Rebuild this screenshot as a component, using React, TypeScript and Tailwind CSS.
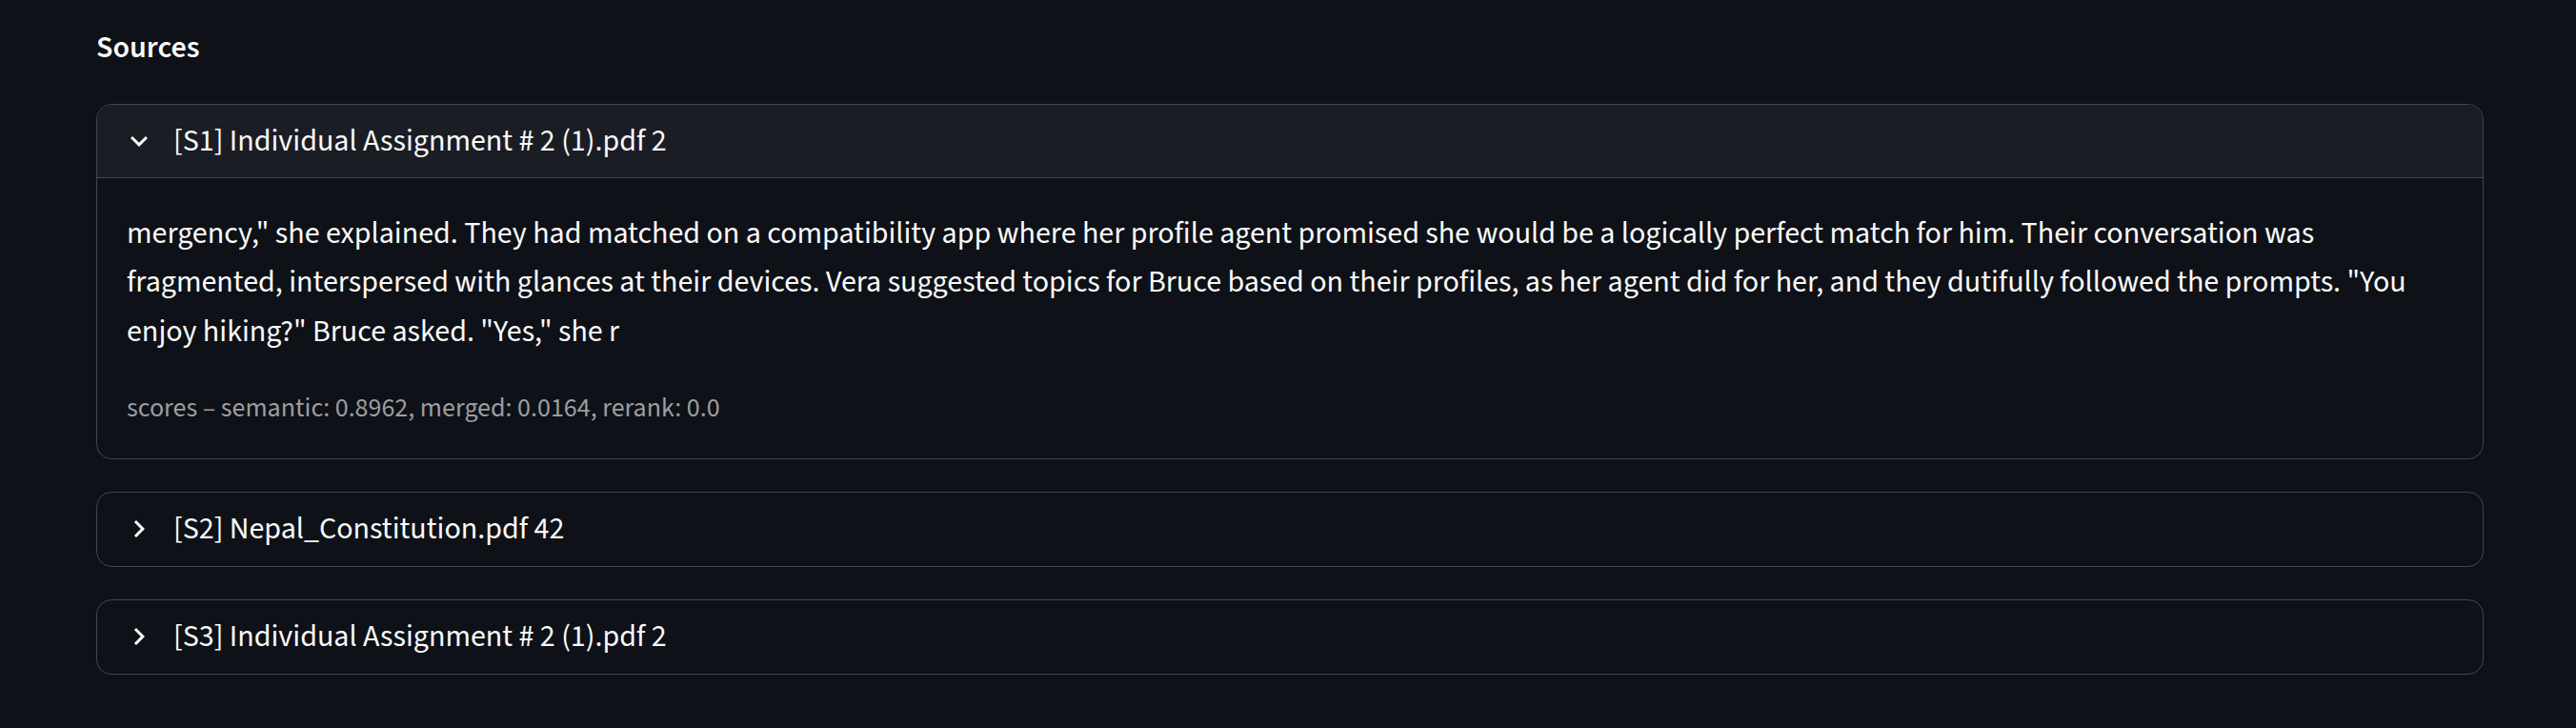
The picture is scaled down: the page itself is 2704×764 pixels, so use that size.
import React from "react";

const BODY = `mergency," she explained. They had matched on a compatibility app where her profile agent promised she would be a logically perfect match for him. Their conversation was fragmented, interspersed with glances at their devices. Vera suggested topics for Bruce based on their profiles, as her agent did for her, and they dutifully followed the prompts. "You enjoy hiking?" Bruce asked. "Yes," she r`;

function ChevronDown() {
  return (
    <svg viewBox="0 0 24 24" className="w-[36px] h-[36px] shrink-0 fill-[#fafafa]">
      <path d="M16.59 8.59L12 13.17 7.41 8.59 6 10l6 6 6-6z" />
    </svg>
  );
}

function ChevronRight() {
  return (
    <svg viewBox="0 0 24 24" className="w-[36px] h-[36px] shrink-0 fill-[#fafafa]">
      <path d="M10 6L8.59 7.41 13.17 12l-4.58 4.59L10 18l6-6z" />
    </svg>
  );
}

function Expander({ title, open, children }: { title: string; open?: boolean; children?: React.ReactNode }) {
  return (
    <div className="border border-[#44464c] rounded-[16px] overflow-hidden">
      <div
        className={
          open
            ? "h-[77px] flex items-center pl-[26px] gap-[18px] bg-[#1b1d25] border-b border-[#44464c]"
            : "h-[77px] flex items-center pl-[26px] gap-[18px]"
        }
      >
        {open ? <ChevronDown /> : <ChevronRight />}
        <span className="text-[32px] leading-[51.2px] text-[#fafafa]">{title}</span>
      </div>
      {open && <div className="pt-[33px] pb-[30px] px-[31px] flex flex-col gap-[32px]">{children}</div>}
    </div>
  );
}

export default function App() {
  return (
    <div className="min-h-[764px] bg-[#0e1117] pl-[101px] pt-[25px] font-['Source_Sans_3','Source_Sans_Pro',sans-serif] antialiased">
      <div className="w-[2506px] flex flex-col">
        <div className="text-[32px] leading-[51.2px] font-semibold text-[#fafafa]">Sources</div>
        <div className="mt-[33px] flex flex-col gap-[34px]">
          <Expander title="[S1] Individual Assignment # 2 (1).pdf 2" open>
            <p className="text-[32px] leading-[51.2px] text-[#fafafa]">{BODY}</p>
            <p className="text-[28px] leading-[44.8px] text-[#9c9da1]">scores – semantic: 0.8962, merged: 0.0164, rerank: 0.0</p>
          </Expander>
          <Expander title="[S2] Nepal_Constitution.pdf 42" />
          <Expander title="[S3] Individual Assignment # 2 (1).pdf 2" />
        </div>
      </div>
    </div>
  );
}
